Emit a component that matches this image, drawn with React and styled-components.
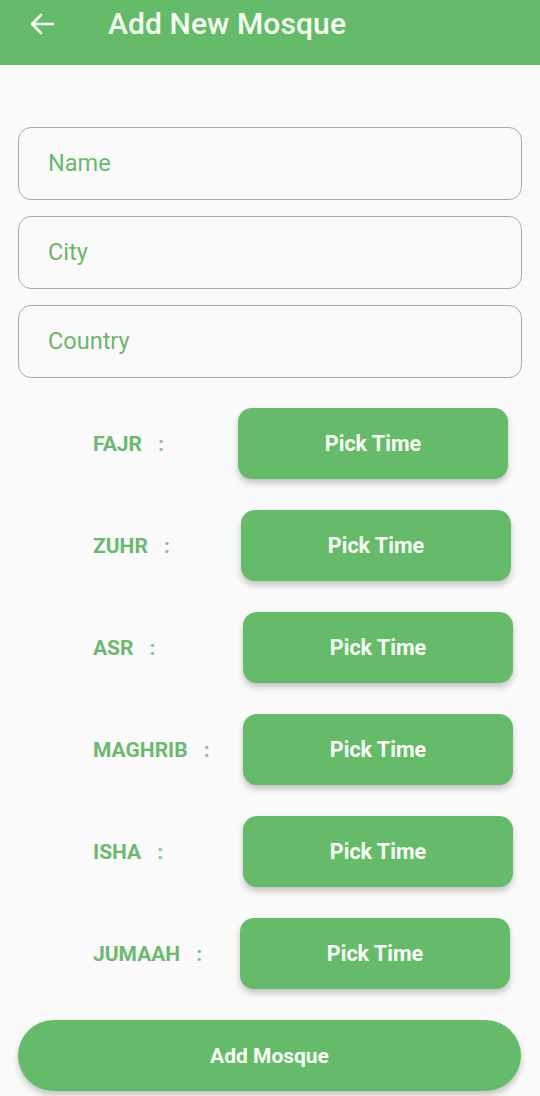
import React from "react";
import styled, { createGlobalStyle } from "styled-components";

const Global = createGlobalStyle`
  html, body { margin: 0; padding: 0; background: #fafafa; }
  body { font-family: Roboto, "Noto Sans", sans-serif; }
  * { box-sizing: border-box; }
`;

const Page = styled.div`
  width: 540px;
  min-height: 1096px;
  background: #fafafa;
  overflow: hidden;
`;

const AppBar = styled.header`
  height: 65px;
  background: #66bb6a;
  display: flex;
  align-items: center;
  padding: 0 0 18px 28px;
`;

const BackButton = styled.div`
  width: 28px;
  height: 24px;
  display: flex;
  align-items: center;
  justify-content: center;
`;

const Title = styled.h1`
  margin: 0 0 0 52px;
  font-size: 30px;
  font-weight: 500;
  color: #f4fff2;
  letter-spacing: 0.1px;
`;

const Form = styled.div`
  padding: 62px 18px 0 18px;
  display: flex;
  flex-direction: column;
  gap: 16px;
`;

const Field = styled.div`
  height: 73px;
  border: 1.5px solid #ababab;
  border-radius: 13px;
  display: flex;
  align-items: center;
  padding-left: 29px;
  padding-bottom: 2px;
  font-size: 23.5px;
  color: #6db571;
`;

const Times = styled.div`
  display: flex;
  flex-direction: column;
  gap: 31px;
  padding-top: 14px;
`;

const Row = styled.div`
  display: grid;
  grid-template-columns: 145px 270px;
  align-items: center;
  padding-left: 75px;
`;

const Label = styled.span`
  font-size: 21px;
  font-weight: 700;
  color: #6cb870;
  white-space: nowrap;
`;

const Colon = styled.span`
  margin-left: 16px;
  color: #7dbf80;
`;

const PickButton = styled.button`
  margin-left: ${(p) => p.$shift}px;
  width: 270px;
  height: 71px;
  border: none;
  border-radius: 14px;
  background: #66bb6a;
  color: #f7fff5;
  font-family: Roboto, "Noto Sans", sans-serif;
  font-size: 21.5px;
  font-weight: 700;
  box-shadow: 0 4px 6px rgba(0, 0, 0, 0.22);
  padding-bottom: 2px;
`;

const SubmitButton = styled.button`
  margin: 31px 18px 0 18px;
  width: 503px;
  height: 71px;
  border: none;
  border-radius: 36px;
  background: #66bb6a;
  color: #f7fff5;
  font-family: Roboto, "Noto Sans", sans-serif;
  font-size: 21px;
  font-weight: 700;
  box-shadow: 0 4px 6px rgba(0, 0, 0, 0.22);
`;

const prayers = [
  { name: "FAJR", shift: 0 },
  { name: "ZUHR", shift: 3 },
  { name: "ASR", shift: 5 },
  { name: "MAGHRIB", shift: 5 },
  { name: "ISHA", shift: 5 },
  { name: "JUMAAH", shift: 2 },
];

export default function App() {
  return (
    <Page>
      <Global />
      <AppBar>
        <BackButton>
          <svg width="26" height="22" viewBox="0 0 26 22" fill="none">
            <path
              d="M24 11H3M12 2L3 11l9 9"
              stroke="#f4fff2"
              strokeWidth="2.6"
              strokeLinecap="round"
              strokeLinejoin="round"
            />
          </svg>
        </BackButton>
        <Title>Add New Mosque</Title>
      </AppBar>
      <Form>
        <Field>Name</Field>
        <Field>City</Field>
        <Field>Country</Field>
        <Times>
          {prayers.map((p) => (
            <Row key={p.name}>
              <Label>
                {p.name}
                <Colon>:</Colon>
              </Label>
              <PickButton $shift={p.shift}>Pick Time</PickButton>
            </Row>
          ))}
        </Times>
      </Form>
      <SubmitButton>Add Mosque</SubmitButton>
    </Page>
  );
}
